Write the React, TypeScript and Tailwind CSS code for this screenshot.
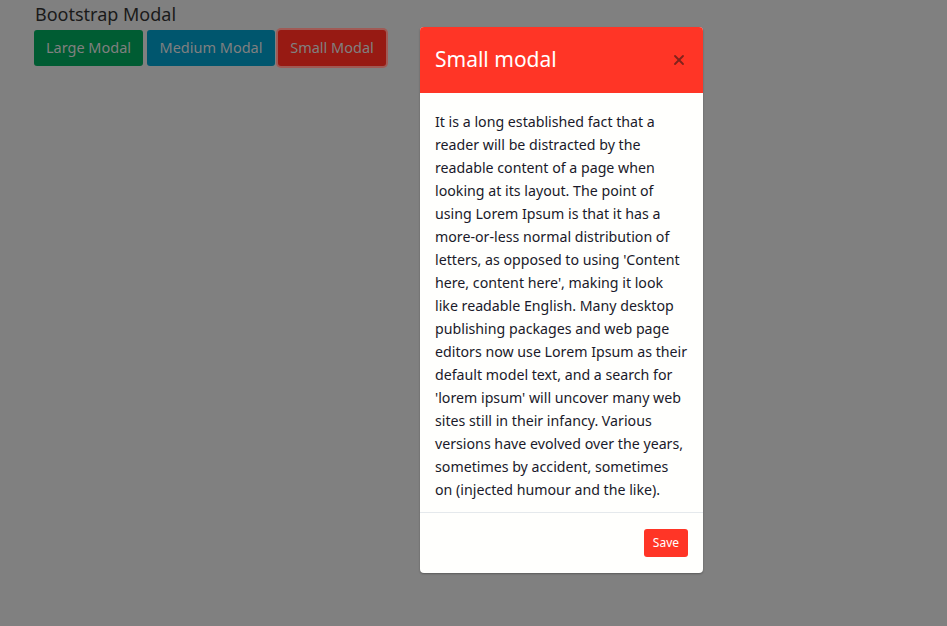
import { X } from "lucide-react"

const lines = [
  "It is a long established fact that a",
  "reader will be distracted by the",
  "readable content of a page when",
  "looking at its layout. The point of",
  "using Lorem Ipsum is that it has a",
  "more-or-less normal distribution of",
  "letters, as opposed to using 'Content",
  "here, content here', making it look",
  "like readable English. Many desktop",
  "publishing packages and web page",
  "editors now use Lorem Ipsum as their",
  "default model text, and a search for",
  "'lorem ipsum' will uncover many web",
  "sites still in their infancy. Various",
  "versions have evolved over the years,",
  "sometimes by accident, sometimes",
  "on (injected humour and the like).",
]

export default function App() {
  return (
    <div
      className="relative w-[947px] h-[626px] bg-[#808080] overflow-hidden"
      style={{ fontFamily: '"Noto Sans", "Open Sans", sans-serif' }}
    >
      {/* Page behind backdrop */}
      <div className="pl-[34px] pt-[1px]">
        <h2 className="text-[18px] leading-[26px] text-[#1a1a1a] ml-[1px]">Bootstrap Modal</h2>
        <div className="flex gap-[4px] mt-[3px]">
          <button className="h-[36px] w-[109px] rounded-[3px] bg-[#005c33] text-[#808080] text-[14.5px]">
            Large Modal
          </button>
          <button className="h-[36px] w-[128px] rounded-[3px] bg-[#00566e] text-[#808080] text-[14.5px]">
            Medium Modal
          </button>
          <button className="h-[36px] w-[108px] ml-[-1px] rounded-[3px] bg-[#971a13] text-[#808080] text-[14.5px] ring-[2px] ring-[#a05a55]">
            Small Modal
          </button>
        </div>
      </div>

      {/* Modal */}
      <div className="absolute left-[420px] top-[27px] w-[283px] bg-[#fffffd] rounded-[4px] overflow-hidden shadow-[0_1px_2px_rgba(0,0,0,0.3)]">
        <div className="h-[66px] bg-[#ff3526] flex items-center justify-between px-[15px]">
          <h4 className="text-[21px] text-white">Small modal</h4>
          <X className="w-[16px] h-[16px] text-[#80231c] mr-[1px]" strokeWidth={2.75} />
        </div>
        <div className="px-[15px] pt-[17px] pb-[11px]">
          <p className="text-[14.2px] leading-[23px] text-[#1a1a2a] whitespace-nowrap">
            {lines.map((l, i) => (
              <span key={i} className="block">
                {l}
              </span>
            ))}
          </p>
        </div>
        <div className="border-t border-[#e5e9ec] flex justify-end px-[15px] py-[16px]">
          <button className="h-[28px] px-[9px] rounded-[3px] bg-[#ff3526] text-white text-[12px]">
            Save
          </button>
        </div>
      </div>
    </div>
  )
}
